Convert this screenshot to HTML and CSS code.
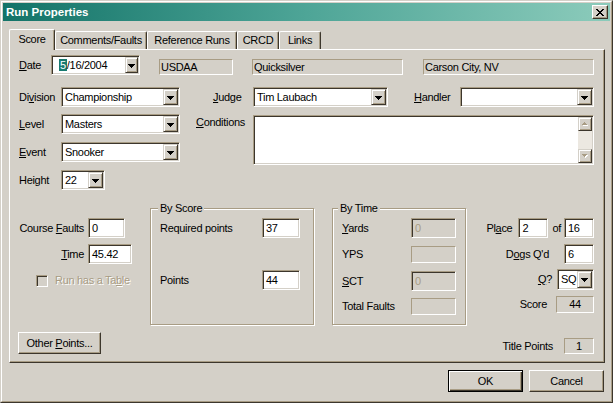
FILE: index.html
```html
<!DOCTYPE html>
<html>
<head>
<meta charset="utf-8">
<title>Run Properties</title>
<link rel="stylesheet" href="styles.css">
</head>
<body>
<div class="window">
 <div class="frame">
  <div class="titlebar">
   <span class="title">Run Properties</span>
   <span class="close"><svg width="8" height="7" viewBox="0 0 8 7"><path d="M0 0h2v1H0zM6 0h2v1H6zM1 1h2v1H1zM5 1h2v1H5zM2 2h4v1H2zM3 3h2v1H3zM2 4h4v1H2zM1 5h2v1H1zM5 5h2v1H5zM0 6h2v1H0zM6 6h2v1H6z"/></svg></span>
  </div>

  <div class="tabs">
   <div class="tab active t-score">Score</div>
   <div class="tab t-comments">Comments/Faults</div>
   <div class="tab t-ref">Reference Runs</div>
   <div class="tab t-crcd">CRCD</div>
   <div class="tab t-links">Links</div>
  </div>

  <div class="panel">
   <div class="row r1">
    <label class="lbl l-date"><u>D</u>ate</label>
    <div class="combo sunken c-date"><span class="val v-date"><span class="hl">5</span>/16/2004</span><span class="drop d-narrow"><svg width="7" height="4" viewBox="0 0 7 4"><path d="M0 0h7v1H0zM1 1h5v1H1zM2 2h3v1H2zM3 3h1v1H3z"/></svg></span></div>
    <div class="static s-club">USDAA</div>
    <div class="static s-dog">Quicksilver</div>
    <div class="static s-loc">Carson City, NV</div>
   </div>

   <div class="row r2">
    <label class="lbl l-div">Di<u>v</u>ision</label>
    <div class="combo sunken c-main"><span class="val">Championship</span><span class="drop"><svg width="7" height="4" viewBox="0 0 7 4"><path d="M0 0h7v1H0zM1 1h5v1H1zM2 2h3v1H2zM3 3h1v1H3z"/></svg></span></div>
    <label class="lbl l-judge"><u>J</u>udge</label>
    <div class="combo sunken c-judge"><span class="val">Tim Laubach</span><span class="drop"><svg width="7" height="4" viewBox="0 0 7 4"><path d="M0 0h7v1H0zM1 1h5v1H1zM2 2h3v1H2zM3 3h1v1H3z"/></svg></span></div>
    <label class="lbl l-handler"><u>H</u>andler</label>
    <div class="combo sunken c-handler"><span class="val"></span><span class="drop"><svg width="7" height="4" viewBox="0 0 7 4"><path d="M0 0h7v1H0zM1 1h5v1H1zM2 2h3v1H2zM3 3h1v1H3z"/></svg></span></div>
   </div>

   <div class="row r3">
    <div class="col3">
     <div class="row">
      <label class="lbl l-div"><u>L</u>evel</label>
      <div class="combo sunken c-main"><span class="val">Masters</span><span class="drop"><svg width="7" height="4" viewBox="0 0 7 4"><path d="M0 0h7v1H0zM1 1h5v1H1zM2 2h3v1H2zM3 3h1v1H3z"/></svg></span></div>
     </div>
     <div class="row">
      <label class="lbl l-div"><u>E</u>vent</label>
      <div class="combo sunken c-main"><span class="val">Snooker</span><span class="drop"><svg width="7" height="4" viewBox="0 0 7 4"><path d="M0 0h7v1H0zM1 1h5v1H1zM2 2h3v1H2zM3 3h1v1H3z"/></svg></span></div>
     </div>
     <div class="row">
      <label class="lbl l-div">Hei<u>g</u>ht</label>
      <div class="combo sunken c-height"><span class="val">22</span><span class="drop"><svg width="7" height="4" viewBox="0 0 7 4"><path d="M0 0h7v1H0zM1 1h5v1H1zM2 2h3v1H2zM3 3h1v1H3z"/></svg></span></div>
     </div>
    </div>
    <label class="lbl l-cond"><u>C</u>onditions</label>
    <div class="memo sunken">
     <div class="memo-text"></div>
     <div class="vscroll">
      <span class="sbtn"><svg width="6" height="4" viewBox="0 0 6 4"><path class="emb" d="M3 1h1v1H3zM2 2h3v1H2zM1 3h5v1H1z"/><path class="gly" d="M2 0h1v1H2zM1 1h3v1H1zM0 2h5v1H0z"/></svg></span>
      <span class="track"></span>
      <span class="sbtn"><svg width="6" height="4" viewBox="0 0 6 4"><path class="emb" d="M1 1h5v1H1zM2 2h3v1H2zM3 3h1v1H3z"/><path class="gly" d="M0 0h5v1H0zM1 1h3v1H1zM2 2h1v1H2z"/></svg></span>
     </div>
    </div>
   </div>

   <div class="row r4">
    <div class="col-left">
     <div class="frow">
      <label class="lbl l-cf">Course <u>F</u>aults</label>
      <div class="edit sunken e-cf">0</div>
     </div>
     <div class="frow f-time">
      <label class="lbl l-cf"><u>T</u>ime</label>
      <div class="edit sunken e-time">45.42</div>
     </div>
     <div class="chkrow">
      <span class="chk"></span>
      <span class="disabled">Run has a Ta<u>b</u>le</span>
     </div>
    </div>

    <fieldset class="group g-score">
     <legend>By Score</legend>
     <div class="frow f-first">
      <span class="lbl l-req">Required points</span>
      <div class="edit sunken e-pts">37</div>
     </div>
     <div class="frow f-points">
      <span class="lbl l-req">Points</span>
      <div class="edit sunken e-pts">44</div>
     </div>
    </fieldset>

    <fieldset class="group g-time">
     <legend>By Time</legend>
     <div class="frow f-first">
      <label class="lbl l-yards"><u>Y</u>ards</label>
      <div class="edit sunken dis e-yd">0</div>
     </div>
     <div class="frow f-yps">
      <span class="lbl l-yards">YPS</span>
      <div class="static e-yd s-short"></div>
     </div>
     <div class="frow f-sct">
      <label class="lbl l-yards"><u>S</u>CT</label>
      <div class="edit sunken dis e-yd">0</div>
     </div>
     <div class="frow f-tf">
      <span class="lbl l-yards">Total Faults</span>
      <div class="static e-yd s-short"></div>
     </div>
    </fieldset>

    <div class="col-right">
     <div class="frow">
      <label class="lbl m-place">Pl<u>a</u>ce</label>
      <div class="edit sunken e-sm">2</div>
      <span class="lbl m-of">of</span>
      <div class="edit sunken e-sm">16</div>
     </div>
     <div class="frow f-dogs">
      <label class="lbl m-dogs">D<u>o</u>gs Q'd</label>
      <div class="edit sunken e-sm">6</div>
     </div>
     <div class="frow f-q">
      <label class="lbl m-q"><u>Q</u>?</label>
      <div class="combo sunken c-q"><span class="val">SQ</span><span class="drop"><svg width="7" height="4" viewBox="0 0 7 4"><path d="M0 0h7v1H0zM1 1h5v1H1zM2 2h3v1H2zM3 3h1v1H3z"/></svg></span></div>
     </div>
     <div class="frow f-score">
      <span class="lbl m-score">Score</span>
      <div class="static disp d-score">44</div>
     </div>
    </div>
   </div>

   <div class="row r5">
    <div class="btn b-other"><span>Other <u>P</u>oints...</span></div>
    <div class="tp">
     <span class="lbl m-tp">Title Points</span>
     <div class="static disp d-tp">1</div>
    </div>
   </div>
  </div>

  <div class="buttons">
   <div class="btn default b-dlg"><span>OK</span></div>
   <div class="btn b-dlg"><span>Cancel</span></div>
  </div>
 </div>
</div>
</body>
</html>
```

FILE: styles.css
```css
:root {
  --face: #d4d0c8;
  --light: #ffffff;
  --shadow: #a89c84;
  --dark: #3c362c;
  --teal: #187a70;
}

* { box-sizing: border-box; }

html, body { margin: 0; padding: 0; }

body {
  background: var(--face);
  font-family: "Liberation Sans", Arial, sans-serif;
  font-size: 11px;
  line-height: 13px;
  letter-spacing: -0.3px;
  color: #000;
  width: 613px;
  height: 403px;
  overflow: hidden;
}

u { text-decoration: underline; text-underline-offset: 1px; }

.window {
  width: 613px;
  height: 403px;
  border: 1px solid;
  border-color: var(--face) var(--dark) var(--dark) var(--face);
}

.frame {
  height: 100%;
  border: 1px solid;
  border-color: var(--light) var(--shadow) var(--shadow) var(--light);
  padding: 1px;
}

/* title bar */
.titlebar {
  height: 18px;
  display: flex;
  align-items: center;
  justify-content: space-between;
  padding: 0 2px 0 3px;
  background: linear-gradient(to right, #137368 0%, #4ea597 50%, #8ccbbb 100%);
}

.title {
  color: #fff;
  font-weight: bold;
  font-size: 11.5px;
  letter-spacing: 0;
}

.close {
  width: 16px;
  height: 14px;
  background: var(--face);
  border: 1px solid;
  border-color: var(--light) var(--dark) var(--dark) var(--light);
  box-shadow: inset -1px -1px 0 var(--shadow);
  display: flex;
  align-items: center;
  justify-content: center;
  padding-right: 1px;
}

/* tabs */
.tabs {
  display: flex;
  align-items: flex-end;
  height: 20px;
  margin: 8px 0 0 6px;
  position: relative;
  z-index: 1;
}

.tab {
  height: 18px;
  border-top: 1px solid var(--light);
  border-left: 1px solid var(--light);
  border-right: 1px solid var(--dark);
  box-shadow: inset -1px 0 0 var(--shadow);
  text-align: center;
  padding-top: 2px;
  white-space: nowrap;
  border-radius: 2px 2px 0 0;
}

.tab.active {
  height: 21px;
  margin-bottom: -1px;
  background: var(--face);
  padding-top: 3px;
}

.t-score { width: 46px; }
.t-comments { width: 92px; }
.t-ref { width: 90px; }
.t-crcd { width: 42px; }
.t-links { width: 42px; }

/* panel */
.panel {
  margin-left: 6px;
  width: 596px;
  height: 314px;
  border: 1px solid;
  border-color: var(--light) var(--dark) var(--dark) var(--light);
  box-shadow: inset -1px -1px 0 var(--shadow);
  padding: 5px 10px 0 9px;
  display: flex;
  flex-direction: column;
}

.row { display: flex; align-items: center; }

.lbl { white-space: nowrap; }

/* 3D primitives */
.sunken {
  border: 1px solid;
  border-color: var(--shadow) var(--light) var(--light) var(--shadow);
  box-shadow: inset 1px 1px 0 var(--dark), inset -1px -1px 0 var(--face);
  background: #fff;
}

.static {
  border: 1px solid;
  border-color: var(--shadow) var(--light) var(--light) var(--shadow);
  background: var(--face);
  height: 16px;
  padding: 0 0 0 1px;
  line-height: 14px;
  white-space: nowrap;
}

.combo {
  display: flex;
  height: 20px;
  padding: 1px;
}

.combo .val {
  flex: 1;
  padding-left: 2px;
  line-height: 16px;
  white-space: nowrap;
  overflow: hidden;
}

.drop {
  width: 15px;
  height: 16px;
  background: var(--face);
  border: 1px solid;
  border-color: var(--face) var(--dark) var(--dark) var(--face);
  box-shadow: inset 1px 1px 0 var(--light), inset -1px -1px 0 var(--shadow);
  display: flex;
  align-items: center;
  justify-content: center;
  padding-top: 1px;
}

.drop.d-narrow { width: 13px; }

.edit {
  height: 20px;
  padding: 1px 0 0 3px;
  line-height: 16px;
}

.edit.dis { background: var(--face); color: var(--shadow); }

/* row 1 */
.r1 { height: 20px; align-items: flex-start; }
.l-date { width: 32px; align-self: center; }
.c-date { width: 89px; }
.v-date { padding-left: 6px !important; }
.hl { background: var(--teal); color: #fff; padding: 0 1px; }
.s-club { width: 74px; margin: 4px 0 0 19px; }
.s-dog { width: 151px; margin: 4px 0 0 19px; }
.s-loc { width: 171px; margin: 4px 0 0 20px; }

/* row 2 */
.r2 { margin-top: 12px; }
.l-div { width: 42px; }
.c-main { width: 119px; }
.l-judge { width: 40px; margin-left: 33px; }
.c-judge { width: 135px; }
.l-handler { width: 46px; margin-left: 26px; }
.c-handler { width: 134px; }

/* row 3 */
.r3 { margin-top: 7px; align-items: flex-start; }
.col3 { width: 161px; display: flex; flex-direction: column; gap: 8px; }
.c-height { width: 44px; }
.l-cond { width: 57px; margin: 2px 0 0 16px; }

.memo {
  width: 341px;
  height: 50px;
  margin-top: 1px;
  display: flex;
  padding: 1px 1px 1px 1px;
}
.memo-text { flex: 1; }
.vscroll { width: 14px; display: flex; flex-direction: column; }
.sbtn {
  width: 14px;
  height: 14px;
  background: var(--face);
  border: 1px solid;
  border-color: var(--face) var(--dark) var(--dark) var(--face);
  box-shadow: inset 1px 1px 0 var(--light), inset -1px -1px 0 var(--shadow);
  display: flex;
  align-items: center;
  justify-content: center;
}
.sbtn .gly { fill: var(--shadow); }
.sbtn .emb { fill: var(--light); }
.track {
  flex: 1;
  background: #ece8e1;
}

/* row 4 */
.r4 { margin-top: 12px; align-items: flex-start; }
.frow { display: flex; align-items: center; }

.col-left { width: 131px; padding-top: 16px; }
.l-cf { width: 69px; text-align: right; padding-right: 4px; }
.e-cf { width: 37px; }
.e-time { width: 44px; }
.f-time { margin-top: 6px; }
.chkrow { display: flex; align-items: center; margin: 10px 0 0 17px; }
.chk {
  width: 12px;
  height: 12px;
  border: 1px solid;
  border-color: var(--shadow) var(--light) var(--light) var(--shadow);
  box-shadow: inset 1px 1px 0 var(--dark), inset -1px -1px 0 var(--face);
  background: var(--face);
  margin-right: 7px;
}
.disabled { color: var(--shadow); text-shadow: 1px 1px 0 var(--light); }

.group {
  margin: 0;
  padding: 0 0 0 9px;
  border: 1px solid var(--shadow);
  box-shadow: inset 1px 1px 0 var(--light), 1px 1px 0 var(--light);
  height: 123px;
  min-width: 0;
}
.group legend {
  padding: 0 2px;
  line-height: 13px;
  background: var(--face);
}
.g-score { width: 164px; }
.g-score legend { margin-left: -2px; }
.g-time { width: 134px; margin-left: 18px; }
.g-time legend { margin-left: -4px; }

.f-first { margin-top: 3px; }
.l-req { width: 102px; }
.e-pts { width: 38px; }
.f-points { margin-top: 32px; }

.l-yards { width: 69px; }
.e-yd { width: 45px; }
.s-short { height: 17px; }
.f-yps { margin-top: 8px; }
.f-sct { margin-top: 8px; }
.f-tf { margin-top: 7px; }

.col-right {
  flex: 1;
  padding-top: 16px;
  display: flex;
  flex-direction: column;
  align-items: flex-end;
}
.e-sm { width: 30px; }
.m-place { margin-right: 6px; }
.m-of { margin: 0 3px 0 4px; }
.f-dogs { margin-top: 6px; }
.m-dogs { margin-right: 15px; }
.f-q { margin-top: 5px; }
.m-q { margin-right: 5px; }
.c-q { width: 37px; height: 21px; }
.c-q .drop { height: 17px; }
.f-score { margin-top: 6px; }
.m-score { margin-right: 9px; }
.disp { text-align: center; padding: 0; }
.d-score { width: 38px; height: 17px; line-height: 15px; }

/* row 5 */
.r5 { margin-top: 7px; justify-content: space-between; align-items: flex-end; }
.b-other { width: 83px; margin-left: -1px; }
.tp { display: flex; align-items: center; }
.m-tp { margin-right: 11px; }
.d-tp { width: 30px; height: 16px; }

/* buttons */
.btn {
  height: 22px;
  border: 1px solid;
  border-color: var(--light) var(--dark) var(--dark) var(--light);
  box-shadow: inset -1px -1px 0 var(--shadow);
  background: var(--face);
  display: flex;
  align-items: center;
  justify-content: center;
  white-space: nowrap;
}
.btn.default {
  border-color: #000;
  box-shadow: inset 1px 1px 0 var(--light), inset -1px -1px 0 var(--dark), inset -2px -2px 0 var(--shadow);
}

.buttons {
  display: flex;
  justify-content: flex-end;
  gap: 6px;
  margin-top: 7px;
  padding-right: 6px;
}
.b-dlg { width: 75px; }
```
